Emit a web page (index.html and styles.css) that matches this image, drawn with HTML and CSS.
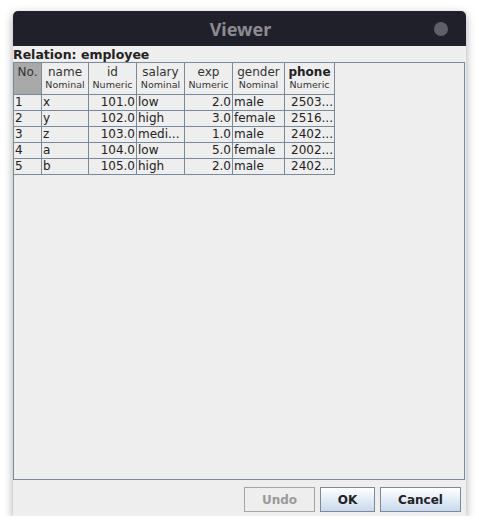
FILE: index.html
```html
<!DOCTYPE html>
<html>
<head>
<meta charset="utf-8">
<link rel="stylesheet" href="styles.css">
</head>
<body>
<div class="window">
  <div class="titlebar">
    <span class="title">Viewer</span>
    <span class="dot"></span>
  </div>
  <div class="relation">Relation: employee</div>
  <div class="tablepanel">
    <div class="grid">
      <div class="hc no">No.</div>
      <div class="hc"><span class="hn">name</span><span class="ht">Nominal</span></div>
      <div class="hc"><span class="hn">id</span><span class="ht">Numeric</span></div>
      <div class="hc"><span class="hn">salary</span><span class="ht">Nominal</span></div>
      <div class="hc"><span class="hn">exp</span><span class="ht">Numeric</span></div>
      <div class="hc"><span class="hn">gender</span><span class="ht">Nominal</span></div>
      <div class="hc"><span class="hn bold">phone</span><span class="ht">Numeric</span></div>

      <div class="c">1</div><div class="c">x</div><div class="c r">101.0</div><div class="c">low</div><div class="c r">2.0</div><div class="c">male</div><div class="c r">2503...</div>
      <div class="c">2</div><div class="c">y</div><div class="c r">102.0</div><div class="c">high</div><div class="c r">3.0</div><div class="c">female</div><div class="c r">2516...</div>
      <div class="c">3</div><div class="c">z</div><div class="c r">103.0</div><div class="c">medi...</div><div class="c r">1.0</div><div class="c">male</div><div class="c r">2402...</div>
      <div class="c">4</div><div class="c">a</div><div class="c r">104.0</div><div class="c">low</div><div class="c r">5.0</div><div class="c">female</div><div class="c r">2002...</div>
      <div class="c">5</div><div class="c">b</div><div class="c r">105.0</div><div class="c">high</div><div class="c r">2.0</div><div class="c">male</div><div class="c r">2402...</div>
    </div>
  </div>
  <div class="buttons">
    <button class="btn disabled">Undo</button>
    <button class="btn ok">OK</button>
    <button class="btn cancel">Cancel</button>
  </div>
</div>
</body>
</html>
```
FILE: styles.css
```css
html, body {
  margin: 0;
  padding: 0;
  background: #ffffff;
}
body {
  font-family: "DejaVu Sans", sans-serif;
}
.window {
  margin: 11px 0 0 13px;
  width: 453px;
  height: 505px;
  background: #eeeeee;
  border-radius: 5px 5px 0 0;
  box-shadow: 0 3px 10px rgba(0, 0, 0, 0.35);
  display: flex;
  flex-direction: column;
}
.titlebar {
  height: 35px;
  background: #20202a;
  border-radius: 5px 5px 0 0;
  position: relative;
  display: flex;
  align-items: center;
  justify-content: center;
}
.title {
  font-family: "Noto Sans", sans-serif;
  color: #8b8b91;
  font-weight: bold;
  font-size: 18px;
  margin-left: 2px;
}
.dot {
  position: absolute;
  right: 18px;
  top: 11px;
  width: 14px;
  height: 14px;
  border-radius: 50%;
  background: #5f5f69;
}
.relation {
  height: 16px;
  font-size: 12.5px;
  font-weight: bold;
  color: #222222;
  line-height: 17px;
}
.tablepanel {
  width: 450px;
  height: 416px;
  border: 1px solid #7a8a99;
}
.grid {
  display: grid;
  grid-template-columns: 28px 47px 48px 48px 48px 52px 50px;
  grid-template-rows: 32px repeat(5, 16px);
  width: 321px;
}
.hc {
  border-right: 1px solid #7a8a99;
  border-bottom: 1px solid #7a8a99;
  display: flex;
  flex-direction: column;
  align-items: center;
  color: #333333;
}
.hc.no {
  background: #a9a9a9;
  font-size: 12px;
  line-height: 14px;
  padding-top: 2px;
  box-sizing: border-box;
  color: #333333;
}
.hn {
  font-size: 12px;
  line-height: 14px;
  margin-top: 2px;
}
.hn.bold {
  font-weight: bold;
  color: #222222;
}
.ht {
  font-size: 9.5px;
  line-height: 12px;
  color: #333333;
}
.c {
  border-right: 1px solid #7a8a99;
  border-bottom: 1px solid #7a8a99;
  font-size: 12px;
  line-height: 15px;
  color: #222222;
  padding-left: 1px;
  white-space: nowrap;
  overflow: hidden;
}
.c.r {
  text-align: right;
  padding-left: 0;
  padding-right: 1px;
}
.buttons {
  display: flex;
  justify-content: flex-end;
  gap: 5px;
  padding: 7px 5px 0 0;
}
.btn {
  font-family: "DejaVu Sans", sans-serif;
  font-weight: bold;
  font-size: 12px;
  height: 25px;
  border: 1px solid #7a8a99;
  background: linear-gradient(#ffffff, #c8d9ee);
  color: #222222;
  padding: 0;
  margin: 0;
}
.btn.disabled {
  width: 71px;
  background: #eeeeee;
  border-color: #a4a4a4;
  color: #9a9a9a;
}
.btn.ok {
  width: 55px;
}
.btn.cancel {
  width: 81px;
}
```
